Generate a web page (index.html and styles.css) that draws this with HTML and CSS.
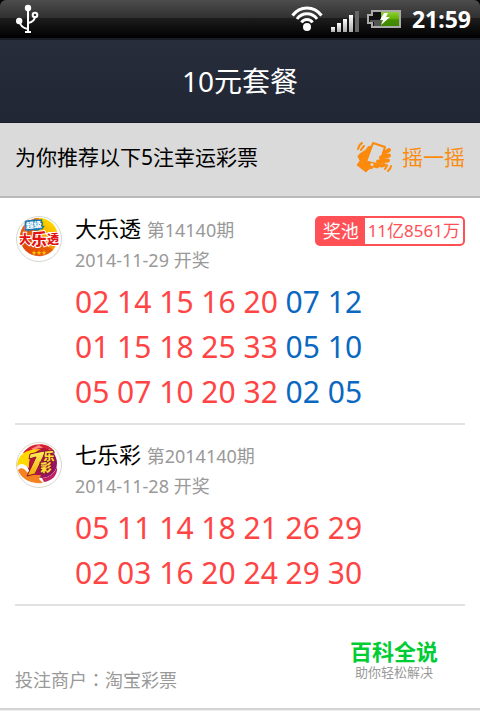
FILE: index.html
```
<!DOCTYPE html>
<html lang="zh-CN">
<head>
    <meta charset="UTF-8">
    <meta name="viewport" content="width=device-width, initial-scale=1.0">
    <title>10元套餐</title>
    <link rel="stylesheet" href="styles.css">
</head>
<body>

    <!-- 状态栏 -->
    <div class="status-bar">
        <div class="status-inner">
            <svg class="usb" width="24" height="30" viewBox="0 0 24 30" fill="none" stroke="#fff" stroke-width="2">
                <path d="M12 4V27"/>
                <path d="M3.500 17C4 22 7 24 12 25"/>
                <path d="M19 12C19 16 17 18 12 19"/>
                <circle cx="19" cy="11" r="2.300"/>
                <circle cx="12" cy="4" r="3.200" fill="#fff" stroke="none"/>
                <circle cx="3.200" cy="17" r="3.200" fill="#fff" stroke="none"/>
                <path d="M9 28H15"/>
            </svg>
            <div class="status-icons">
                <svg width="32" height="28" viewBox="0 0 32 28" fill="none" stroke="#fff" stroke-width="3">
                    <path d="M1.500 10.500C9 .500 23 .500 30.500 10.500"/>
                    <path d="M6 14C11 7 21 7 26 14"/>
                    <path d="M10.500 17.500C13 13.500 19 13.500 21.500 17.500"/>
                    <circle cx="16" cy="22" r="4" fill="#fff" stroke="none"/>
                </svg>
                <svg class="signal" width="28" height="22" viewBox="0 0 28 22">
                    <defs>
                        <linearGradient id="bar" x1="0" y1="0" x2="0" y2="1">
                            <stop offset="0" stop-color="#fff"/>
                            <stop offset="1" stop-color="#aaa"/>
                        </linearGradient>
                    </defs>
                    <g fill="url(#bar)">
                        <rect x="0" y="16" width="4" height="5"/>
                        <rect x="6" y="12" width="4" height="9"/>
                        <rect x="12" y="8" width="4" height="13"/>
                        <rect x="18" y="4" width="4" height="17"/>
                    </g>
                    <rect x="24" y="0" width="4" height="21" fill="#666"/>
                </svg>
                <svg width="34" height="20" viewBox="0 0 34 20">
                    <defs>
                        <linearGradient id="power" x1="0" y1="0" x2="0" y2="1">
                            <stop offset="0" stop-color="#8fd03c"/>
                            <stop offset=".5" stop-color="#62b000"/>
                            <stop offset=".55" stop-color="#479000"/>
                            <stop offset="1" stop-color="#3f8600"/>
                        </linearGradient>
                    </defs>
                    <path d="M5 2H33V18H5V14H1V6H5Z" fill="#111" stroke="#aaa" stroke-width="2"/>
                    <path d="M7 11H14V17H7V13H3V11Z" fill="#555"/>
                    <rect x="14" y="3" width="18" height="14" fill="url(#power)"/>
                    <path d="M17 4H21L19 8H23L14 16L16 11H13Z" fill="#fff"/>
                </svg>
                <span class="clock">21:59</span>
            </div>
        </div>
    </div>

    <!-- 标题 -->
    <header class="title-bar">
        <h1>10元套餐</h1>
    </header>

    <!-- 推荐栏 -->
    <div class="tip-bar">
        <p>为你推荐以下5注幸运彩票</p>
        <button type="button" class="shake">
            <svg width="38" height="34" viewBox="0 0 38 34" fill="none" stroke="#fb8a0d" stroke-linecap="round" stroke-linejoin="round">
                <g stroke-width="2">
                    <path d="M2 9C3 6 4 4 6 3"/>
                    <path d="M5 10C6 8 7 7 8 6"/>
                    <path d="M29 29C30 28 31 26 31 25"/>
                    <path d="M32 31C34 29 35 28 35 26"/>
                </g>
                <path d="M2 16C4 12 10 12 12 7L15 6L10 22L17 28L13 29L10 32L1 25L4 21Z" fill="#fb8a0d" stroke-width="1"/>
                <path d="M17 3L29 7L23 26L10 22Z" fill="#dadada" stroke-width="2"/>
                <path d="M10 21L23 24L22 28L9 25Z" fill="#fb8a0d" stroke-width="1"/>
                <circle cx="16" cy="24.500" r="1.500" fill="#dadada" stroke="none"/>
                <path d="M28 13L33 10M25 17.500L33 15.500M22 21.500L32 20.500M25 25.500L28 25" stroke-width="4"/>
            </svg>
            <span>摇一摇</span>
        </button>
    </div>

    <!-- 彩票列表 -->
    <main class="ticket">
        <section class="lottery">
            <svg class="logo" width="48" height="48" viewBox="0 0 48 48">
                <defs>
                    <linearGradient id="sun" x1="1" y1="0" x2=".2" y2="1">
                        <stop offset=".1" stop-color="#ffe000"/>
                        <stop offset=".5" stop-color="#f9a000"/>
                        <stop offset="1" stop-color="#d83808"/>
                    </linearGradient>
                </defs>
                <circle cx="24" cy="24" r="22.500" fill="#fff" stroke="#d8d5cc"/>
                <circle cx="24" cy="22" r="19" fill="url(#sun)"/>
                <path d="M5 22A19 19 0 0 1 24 3L22 24L38 35A19 19 0 0 1 5 22Z" fill="#e34b08" opacity=".7"/>
                <g class="logo-text" text-anchor="middle">
                    <text x="19" y="13" font-size="8" fill="#fff" stroke="#1479b8" stroke-width="3" transform="rotate(-6 19 12)">超级</text>
                    <text x="10" y="29" font-size="12" fill="#e31414" stroke="#fff" stroke-width="2">大</text>
                    <text x="24" y="30" font-size="16" fill="#e31414" stroke="#fff" stroke-width="2">乐</text>
                    <text x="38" y="29" font-size="12" fill="#e31414" stroke="#fff" stroke-width="2">透</text>
                    <text x="24" y="39" font-size="5" fill="#ffc400">★★★</text>
                </g>
            </svg>
            <div class="detail">
                <div class="detail-head">
                    <div>
                        <h2>大乐透 <small>第14140期</small></h2>
                        <p class="date">2014-11-29 开奖</p>
                    </div>
                    <div class="pool"><span class="pool-label">奖池</span><span class="pool-value">11亿8561万</span></div>
                </div>
                <ul class="numbers">
                    <li>02 14 15 16 20 <span class="blue">07 12</span></li>
                    <li>01 15 18 25 33 <span class="blue">05 10</span></li>
                    <li>05 07 10 20 32 <span class="blue">02 05</span></li>
                </ul>
            </div>
        </section>

        <section class="lottery">
            <svg class="logo" width="48" height="48" viewBox="0 0 48 48">
                <defs>
                    <linearGradient id="ball" x1="0" y1="0" x2="1" y2="1">
                        <stop offset="0" stop-color="#b81828"/>
                        <stop offset=".5" stop-color="#b01450"/>
                        <stop offset="1" stop-color="#7c1470"/>
                    </linearGradient>
                    <linearGradient id="gold" x1="0" y1="0" x2="0" y2="1">
                        <stop offset="0" stop-color="#fff060"/>
                        <stop offset="1" stop-color="#f5a800"/>
                    </linearGradient>
                </defs>
                <circle cx="24" cy="24" r="22.500" fill="#fff" stroke="#d8d5cc"/>
                <path d="M8 12C14 2 32 -1 40 11C32 6 24 8 19 12Z" fill="#d82030"/>
                <path d="M16 8L24 4L28 7L20 10Z" fill="#ff8a80"/>
                <circle cx="27" cy="22" r="15" fill="url(#ball)"/>
                <path d="M2 26C2 14 10 8 26 8C17 12 13 18 14 27C8 22 5 22 2 26Z" fill="#ffd800"/>
                <path d="M3 29C6 26 9 27 12 31C15 34 20 34 26 34L24 38L28 42C16 43 6 38 3 29Z" fill="#f58220"/>
                <path d="M27 37C34 37 39 33 42 26C43 34 37 40 29 41Z" fill="#c02060"/>
                <path d="M15 13L29 10L30 12L20 33L12 35L21 16L14 18Z" fill="url(#gold)" stroke="#8a1430"/>
                <g class="logo-text" fill="#ffe23a" stroke="#8a1430" stroke-width="2" text-anchor="middle">
                    <text x="34" y="20" font-size="11">乐</text>
                    <text x="31" y="31" font-size="11">彩</text>
                </g>
            </svg>
            <div class="detail">
                <div class="detail-head">
                    <div>
                        <h2>七乐彩 <small>第2014140期</small></h2>
                        <p class="date">2014-11-28 开奖</p>
                    </div>
                </div>
                <ul class="numbers">
                    <li>05 11 14 18 21 26 29</li>
                    <li>02 03 16 20 24 29 30</li>
                </ul>
            </div>
        </section>

        <footer class="merchant">
            <p>投注商户<span class="colon" lang="zh-TW">：</span>淘宝彩票</p>
            <div class="brand">
                <strong>百科全说</strong>
                <span>助你轻松解决</span>
            </div>
        </footer>
    </main>

</body>
</html>
```

FILE: styles.css
```
* {
    box-sizing: border-box;
}
body {
    margin: 0;
    background-color: #f0f0f0;
    font-family: "Noto Sans", "Noto Sans CJK SC", sans-serif;
    font-size: 18px;
    color: #000;
}
h1, h2, p, ul {
    margin: 0;
    padding: 0;
    font-weight: normal;
}
svg {
    display: block;
    flex-shrink: 0;
}
/* 状态栏 */
.status-bar {
    background-color: #000;
}
.status-inner {
    display: flex;
    justify-content: space-between;
    align-items: center;
    height: 38px;
    padding: 0 9px 0 16px;
    border-radius: 6px 6px 0 0;
    background: linear-gradient(#4d4d4d, #303030 47%, #1d1d1d 48%, #000);
}
.status-icons {
    display: flex;
    align-items: center;
    gap: 8px;
}
.signal {
    margin-top: 6px;
}
.clock {
    margin-left: 3px;
    color: #fff;
    font-size: 23px;
    font-weight: bold;
    line-height: 38px;
}
/* 标题 */
.title-bar {
    padding: 20px 16px;
    border-top: 2px solid #171b23;
    border-bottom: 1px solid #1a1b2b;
    background: linear-gradient(#272d3b, #212634);
    text-align: center;
}
.title-bar h1 {
    color: #fff;
    font-size: 28px;
    line-height: 42px;
}
/* 推荐栏 */
.tip-bar {
    display: flex;
    justify-content: space-between;
    align-items: center;
    padding: 16px 15px 21px;
    border-bottom: 2px solid #bababa;
    background-color: #dadada;
    font-size: 21px;
    line-height: 36px;
}
.shake {
    display: flex;
    align-items: center;
    gap: 8px;
    padding: 0;
    border: none;
    background: none;
    color: #fb8a0d;
    font: inherit;
    cursor: pointer;
}
/* 彩票列表 */
.ticket {
    padding-top: 1px;
    border-bottom: 2px solid #d5d5d5;
    background-color: #fff;
}
.lottery {
    display: flex;
    gap: 12px;
    margin: 0 15px;
    padding: 14px 0 9px;
    border-bottom: 2px solid #e2e2e2;
}
.logo {
    margin-top: 2px;
}
.logo-text {
    font-family: "Noto Sans CJK SC", sans-serif;
    font-weight: 900;
    paint-order: stroke;
}
.detail {
    flex: 1;
}
.detail-head {
    display: flex;
    justify-content: space-between;
    align-items: flex-start;
}
.detail h2 {
    font-size: 22px;
    line-height: 30px;
}
.detail small {
    color: #999;
    font-size: 18px;
}
.date {
    color: #999;
    line-height: 30px;
}
.pool {
    display: flex;
    margin-top: 3px;
    border: 2px solid #ff5056;
    border-radius: 5px;
    color: #ff5056;
    line-height: 26px;
}
.pool-label {
    padding: 0 6px;
    background-color: #ff5056;
    color: #fff;
}
.pool-value {
    padding: 0 3px;
    font-size: 17px;
}
.numbers {
    margin-top: 4px;
    list-style: none;
    color: #ff4444;
    font-size: 30px;
    line-height: 45px;
}
.blue {
    color: #0a68c0;
}
/* 商户信息 */
.merchant {
    display: flex;
    justify-content: space-between;
    align-items: flex-end;
    padding: 32px 42px 14px 15px;
    color: #999;
    line-height: 28px;
}
.colon {
    font-family: "Noto Sans CJK TC", sans-serif;
}
.brand {
    display: flex;
    flex-direction: column;
    align-items: center;
    padding-bottom: 14px;
}
.brand strong {
    color: #00cc33;
    font-size: 22px;
    line-height: 27px;
}
.brand span {
    font-size: 13px;
    line-height: 15px;
}
```
